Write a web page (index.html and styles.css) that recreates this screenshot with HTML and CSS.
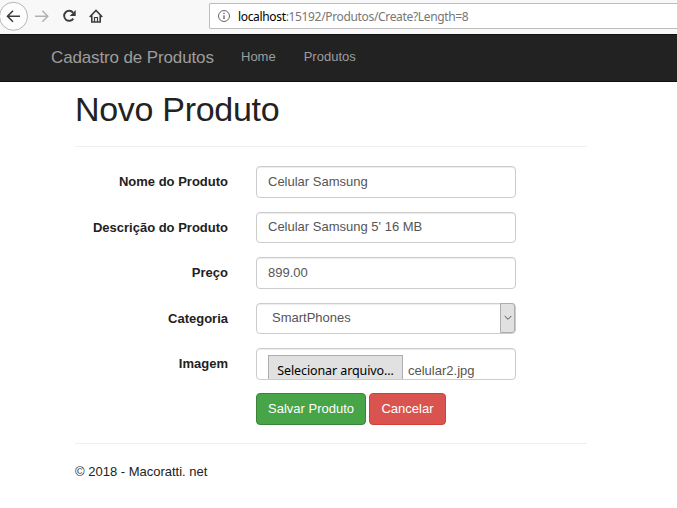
FILE: index.html
```html
<!DOCTYPE html>
<html lang="pt-br">
<head>
<meta charset="utf-8">
<title>Novo Produto</title>
<link rel="stylesheet" href="styles.css">
</head>
<body>
  <div class="toolbar">
    <svg class="tools" width="209" height="34" viewBox="0 0 209 34" fill="none" stroke="#3c3c3c" stroke-width="1.6">
      <circle cx="13.5" cy="16.3" r="14" fill="#fdfdfd" stroke="#b5b5b5" stroke-width="1"/>
      <path d="M20 16.3H8M13 10.8L7.5 16.3L13 21.8"/>
      <path d="M35 16.3H47M42.3 10.8L47.8 16.3L42.3 21.8" stroke="#b1b1b1" stroke-width="1.5"/>
      <path d="M73 12.6A5 5 0 1 0 73.3 18.6" stroke-width="1.9"/>
      <path d="M75.7 10V16H69.7Z" fill="#3c3c3c" stroke="none"/>
      <path d="M89.7 17L96 10.5L102.3 17M91.8 15.5V22H100.2V15.5"/>
      <path d="M94.5 22V17.5H97.5V22" stroke-width="1.2"/>
    </svg>
    <div class="address">
      <svg width="14" height="14" viewBox="0 0 14 14" fill="none" stroke="#686868">
        <circle cx="7" cy="7" r="5.5"/>
        <path d="M7 6.2V10M7 3.8V5.1" stroke-width="1.4"/>
      </svg>
      <span class="url"><b>localhost</b>:15192/Produtos/Create?Length=8</span>
    </div>
  </div>

  <div class="navbar">
    <a class="brand">Cadastro de Produtos</a>
    <a class="nav-home">Home</a>
    <a>Produtos</a>
  </div>

  <div class="container">
    <h2>Novo Produto</h2>
    <hr>
    <form>
      <div class="form-group">
        <label for="Nome">Nome do Produto</label>
        <input class="form-control" type="text" id="Nome" value="Celular Samsung">
      </div>
      <div class="form-group">
        <label for="Descricao">Descrição do Produto</label>
        <input class="form-control" type="text" id="Descricao" value="Celular Samsung 5' 16 MB">
      </div>
      <div class="form-group">
        <label for="Preco">Preço</label>
        <input class="form-control" type="text" id="Preco" value="899.00">
      </div>
      <div class="form-group">
        <label>Categoria</label>
        <div class="form-control select">
          <span>SmartPhones</span>
          <div class="arrow">
            <svg width="8" height="6" viewBox="0 0 8 6" fill="none" stroke="#505050"><path d="M0.7 1L4 4.3L7.3 1"/></svg>
          </div>
        </div>
      </div>
      <div class="form-group">
        <label>Imagem</label>
        <div class="form-control file">
          <div class="file-btn">Selecionar arquivo...</div>
          <span>celular2.jpg</span>
        </div>
      </div>
      <div class="buttons">
        <button type="button" class="btn btn-success">Salvar Produto</button>
        <button type="button" class="btn btn-danger">Cancelar</button>
      </div>
    </form>
    <hr>
    <footer>© 2018 - Macoratti. net</footer>
  </div>
</body>
</html>
```

FILE: styles.css
```css
* {
  box-sizing: border-box;
}

body {
  margin: 0;
  background: #fff;
  color: #222;
  font-family: "Liberation Sans", Arial, sans-serif;
  font-size: 13px;
  line-height: 18px;
  overflow: hidden;
}

/* browser bar */
.toolbar {
  display: flex;
  height: 34px;
  background: #f8f8f8;
}

.tools {
  flex: none;
}

.address {
  display: flex;
  align-items: center;
  flex: 1;
  height: 26px;
  margin-top: 3px;
  padding-left: 7px;
  background: #fff;
  border: 1px solid #bdbdbd;
  border-right: 0;
  border-radius: 2px 0 0 2px;
}

.url {
  margin: 2px 0 0 7px;
  color: #777;
  font-family: "Noto Sans", sans-serif;
  font-size: 12px;
  letter-spacing: -.34px;
  white-space: nowrap;
}

.url b {
  color: #000;
  font-weight: normal;
}

/* site menu */
.navbar {
  display: flex;
  align-items: center;
  height: 48px;
  padding: 0 0 2px 51px;
  background: #222;
  border-top: 1px solid #101010;
  border-bottom: 1px solid #101010;
  color: #9d9d9d;
}

.brand {
  width: 163px;
  padding-top: 1px;
  font-size: 17px;
  letter-spacing: -.13px;
  white-space: nowrap;
}

.nav-home {
  margin: 0 28px 0 27px;
}

.container {
  width: 512px;
  margin-left: 75px;
}

h2 {
  margin: 8px 0 0;
  font-size: 34px;
  font-weight: normal;
  letter-spacing: -.3px;
  line-height: 38px;
}

hr {
  margin: 18px 0;
  border: 0;
  border-top: 1px solid #eee;
}

form {
  padding-top: 1px;
}

.form-group {
  display: flex;
  height: 32px;
  margin-bottom: 13.5px;
}

label {
  width: 153px;
  margin-right: 28px;
  padding-top: 7px;
  font-weight: bold;
  text-align: right;
}

.form-control {
  width: 260px;
  height: 31.5px;
  padding: 0 11px;
  background: #fff;
  border: 1px solid #ccc;
  border-radius: 4px;
  box-shadow: inset 0 1px 1px rgba(0, 0, 0, .075);
  color: #555;
  font-family: inherit;
  font-size: 13px;
}

input.form-control {
  padding-bottom: 1px;
}

.select {
  display: flex;
  align-items: center;
  justify-content: space-between;
  padding: 0 0 0 15px;
}

.arrow {
  display: flex;
  align-items: center;
  justify-content: center;
  width: 15px;
  height: 30px;
  background: #e1e1e1;
  border: 1px solid #adadad;
  border-radius: 0 3px 3px 0;
}

.file {
  display: flex;
  padding-top: 6px;
  overflow: hidden;
}

.file-btn {
  flex: none;
  width: 135px;
  height: 30px;
  padding-top: 6px;
  background: #e1e1e1;
  border: 1px solid #adadad;
  color: #000;
  font-family: "Noto Sans", sans-serif;
  font-size: 12.5px;
  letter-spacing: -.1px;
  text-align: center;
  white-space: nowrap;
}

.file span {
  margin: 7px 0 0 5px;
}

.buttons {
  display: flex;
  gap: 3px;
  margin: -1px 0 0 181px;
}

.btn {
  height: 32px;
  padding: 0;
  border: 1px solid;
  border-radius: 4px;
  color: #fff;
  font-family: inherit;
  font-size: 13px;
}

.btn-success {
  width: 110px;
  background: #47a447;
  border-color: #398439;
}

.btn-danger {
  width: 77px;
  background: #d9534f;
  border-color: #d43f3a;
}

footer {
  padding-top: 1px;
}
```
